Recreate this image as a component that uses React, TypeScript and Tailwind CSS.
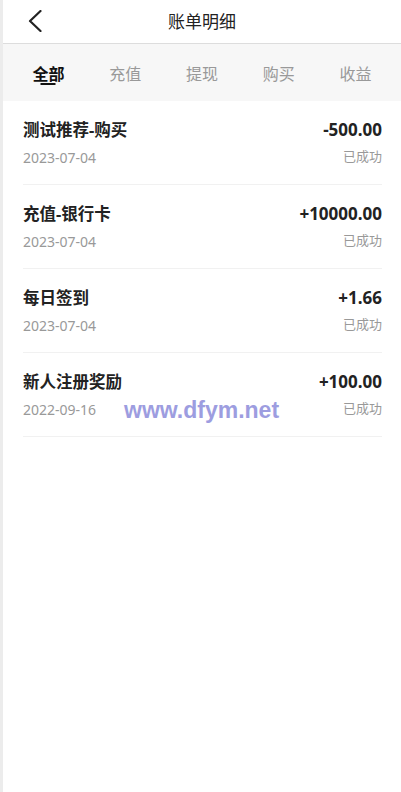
const tabs = ['全部', '充值', '提现', '购买', '收益'];

const records = [
  { title: '测试推荐-购买', amount: '-500.00', date: '2023-07-04', status: '已成功' },
  { title: '充值-银行卡', amount: '+10000.00', date: '2023-07-04', status: '已成功' },
  { title: '每日签到', amount: '+1.66', date: '2023-07-04', status: '已成功' },
  { title: '新人注册奖励', amount: '+100.00', date: '2022-09-16', status: '已成功' },
];

export default function App() {
  return (
    <div
      className="relative flex min-h-[792px] w-[401px] bg-white"
      style={{ fontFamily: '"Noto Sans", "Noto Sans CJK SC", sans-serif' }}
    >
      <div className="w-[3px] shrink-0 bg-[#ececec]" />
      <div className="flex min-w-0 flex-1 flex-col">
        {/* header */}
        <div className="relative flex h-[44px] items-center justify-center border-b border-[#dddddd]">
          <svg className="absolute left-[24px] top-[10px]" width="16" height="22" viewBox="0 0 16 22">
            <polyline points="13.5,1 3,11 13.5,21" fill="none" stroke="#222" strokeWidth="2.2" strokeLinecap="round" strokeLinejoin="round" />
          </svg>
          <span className="text-[17px] leading-none text-[#222]">账单明细</span>
        </div>

        {/* tabs */}
        <div className="grid h-[57px] grid-cols-5 bg-[#f7f7f7] px-[7px]">
          {tabs.map((t, i) => (
            <div key={t} className="relative flex justify-center pt-[22px]">
              <span
                className={
                  i === 0
                    ? 'text-[16px] font-bold leading-none text-[#111]'
                    : 'text-[16px] leading-none text-[#999]'
                }
              >
                {t}
              </span>
              {i === 0 && (
                <span className="absolute left-1/2 top-[39px] h-[2px] w-[15px] -translate-x-1/2 bg-[#111]" />
              )}
            </div>
          ))}
        </div>

        {/* list */}
        <div className="ml-5 mr-[19px]">
          {records.map((r) => (
            <div key={r.title} className="border-b border-[#f1f1f1] pt-[17px] pb-[17px]">
              <div className="flex h-[24px] items-center justify-between">
                <span className="text-[16.5px] font-bold text-[#222]">{r.title}</span>
                <span className="text-[17px] font-bold text-[#222]">{r.amount}</span>
              </div>
              <div className="mt-[5px] flex h-[20px] items-center justify-between">
                <span className="text-[14px] text-[#999]">{r.date}</span>
                <span className="text-[13px] text-[#999]">{r.status}</span>
              </div>
            </div>
          ))}
        </div>
      </div>

      <span
        className="absolute left-[124px] top-[393px] text-[23px] font-bold text-[#9d9de0]"
        style={{ fontFamily: '"Liberation Sans", sans-serif' }}
      >
        www.dfym.net
      </span>
    </div>
  );
}
